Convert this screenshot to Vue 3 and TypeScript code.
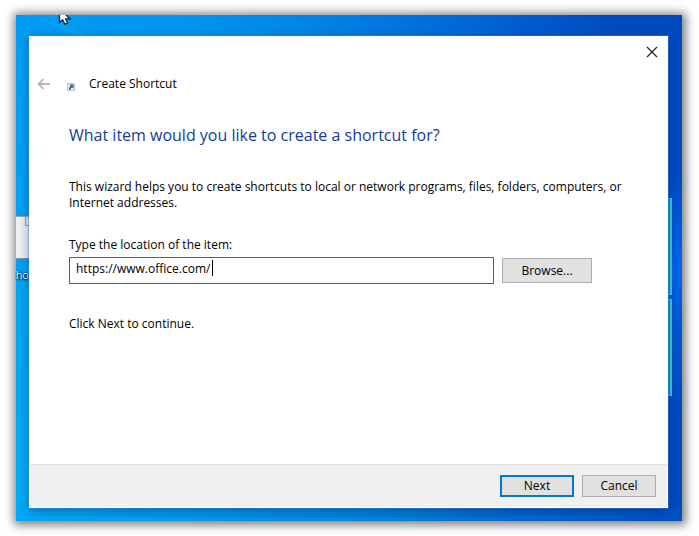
<script setup lang="ts">
import { ref } from 'vue'

const location = ref<string>('https://www.office.com/')
</script>

<template>
  <div class="page">
    <div class="desktop">
      <svg class="rays" viewBox="0 0 120 24" aria-hidden="true">
        <path d="M8 0Q45 6 78 24L58 20Q30 6 8 0Z" fill="#39b2ff" opacity="0.22" />
      </svg>
      <div class="shortcut">
        <div class="thumb"><i></i></div>
        <span class="caption">ho</span>
      </div>
      <div class="tiles"><i></i><i></i></div>
      <svg class="pointer" viewBox="0 0 14 10" aria-hidden="true">
        <path d="M1.5 -6V7.5L4.6 4.8L7 9.2L9.6 8L7.6 3.8H12L2 -6Z" fill="#fff" stroke="#10243c" stroke-width="1.3" />
      </svg>

      <main class="dialog">
        <header class="titlebar">
          <button class="plain back" type="button" aria-label="Back" disabled>
            <svg width="14" height="12" viewBox="0 0 14 12">
              <path d="M13 6H1.5M6.5 1L1.5 6L6.5 11" fill="none" stroke="#b9b9b9" stroke-width="1.8" />
            </svg>
          </button>
          <svg class="badge" width="8" height="8" viewBox="0 0 8 8" aria-hidden="true">
            <rect x="0.5" y="0.5" width="7" height="7" fill="#f1f1f1" stroke="#c4c4c4" />
            <path d="M2.3 1.5H6.5V5.5L5.2 4.4C4 4.9 3.7 5.6 3.7 6.8H1.9C1.7 5 2.3 3.8 3.6 2.9Z" fill="#2f64b0" />
          </svg>
          <span class="title">Create Shortcut</span>
          <button class="plain close" type="button" aria-label="Close">
            <svg width="12" height="12" viewBox="0 0 12 12">
              <path d="M1 1L11 11M11 1L1 11" fill="none" stroke="#222" stroke-width="1.2" />
            </svg>
          </button>
        </header>

        <section class="content">
          <h1>What item would you like to create a shortcut for?</h1>
          <p class="intro">This wizard helps you to create shortcuts to local or network programs, files, folders, computers, or Internet addresses.</p>
          <label for="location">Type the location of the item:</label>
          <div class="row">
            <div class="field">
              <input id="location" v-model="location" type="text" spellcheck="false" />
              <i class="caret"></i>
            </div>
            <button class="btn browse" type="button">Browse...</button>
          </div>
          <p class="hint">Click Next to continue.</p>
        </section>

        <footer class="actions">
          <button class="btn primary" type="button">Next</button>
          <button class="btn" type="button">Cancel</button>
        </footer>
      </main>
    </div>
  </div>
</template>

<style>
body {
  background: #fff;
}
</style>

<style scoped>
.page {
  box-sizing: border-box;
  min-height: 100vh;
  padding: 15px 17px 15px 16px;
  display: flex;
  overflow: hidden;
  font: 12px/16px "Open Sans", "Noto Sans", sans-serif;
  color: #000;
}
.desktop {
  position: relative;
  flex: 1;
  display: flex;
  padding: 21px 14px 13px 13px;
  background:
    linear-gradient(to bottom, transparent 30%, rgba(0, 112, 255, 0.7) 50%, rgba(0, 100, 225, 0.5) 62%, transparent 80%) right / 14px 100% no-repeat,
    linear-gradient(to right, #00aaf6 0%, #009bea 25%, #0083dc 55%, #0062cc 80%, #0050c0 100%) bottom / 100% 13px no-repeat,
    linear-gradient(to bottom, #009cf2, #00adf2) left / 13px 100% no-repeat,
    linear-gradient(to right, #009cf2 0%, #0096ee 25%, #0084e6 45%, #0065d4 70%, #004bc0 90%, #004abf 100%);
  box-shadow: 1px 1px 9px 3px rgba(0, 0, 0, 0.5);
}
.dialog {
  position: relative;
  flex: 1;
  display: flex;
  flex-direction: column;
  background: #fff;
  box-shadow: 0 0 0 1px rgba(50, 130, 210, 0.45), 0 3px 10px rgba(0, 20, 80, 0.4);
}
.titlebar {
  display: flex;
  align-items: center;
  height: 64px;
  padding: 0 10px 0 8px;
}
.plain {
  display: flex;
  padding: 0;
  border: 0;
  background: none;
}
.back,
.title {
  margin-top: 31px;
}
.badge {
  margin-top: 38px;
  margin-left: 16px;
}
.title {
  margin-left: 14px;
}
.close {
  margin: 0 0 32px auto;
}
.content {
  flex: 1;
  padding: 23px 40px 0 40px;
}
h1 {
  margin: 0;
  font-size: 16px;
  line-height: 24px;
  font-weight: 400;
  color: #123c9c;
}
p {
  margin: 0;
}
.intro {
  margin-top: 32px;
}
label {
  display: block;
  margin-top: 26px;
}
.row {
  display: flex;
  align-items: center;
  gap: 8px;
  margin-top: 4px;
  padding-right: 36px;
}
.field {
  position: relative;
  flex: 1;
  display: flex;
}
input {
  box-sizing: border-box;
  width: 100%;
  height: 27px;
  padding: 0 6px 4px;
  border: 1px solid #0078d7;
  border-radius: 0;
  outline: 0;
  background: #fff;
  color: #000;
  font: inherit;
}
.caret {
  position: absolute;
  left: 143px;
  top: 3px;
  width: 1px;
  height: 16px;
  background: #000;
}
.btn {
  box-sizing: border-box;
  width: 74px;
  height: 22px;
  padding: 0;
  border: 1px solid #adadad;
  border-radius: 0;
  background: #e1e1e1;
  color: #000;
  font: inherit;
}
.browse {
  width: 90px;
  height: 25px;
}
.primary {
  border: 2px solid #0078d7;
}
.hint {
  margin-top: 32px;
}
.actions {
  display: flex;
  justify-content: flex-end;
  gap: 8px;
  margin: 0 1px 1px;
  padding: 10px 11px;
  border-top: 1px solid #dfdfdf;
  background: #f0f0f0;
}
.pointer {
  position: absolute;
  left: 42px;
  top: 0;
  width: 14px;
  height: 10px;
}
.rays {
  position: absolute;
  left: 0;
  top: 0;
  width: 120px;
  height: 24px;
}
.shortcut {
  position: absolute;
  left: 0;
  top: 201px;
  width: 13px;
}
.thumb {
  display: flex;
  justify-content: flex-end;
  height: 41px;
  border-top: 1px solid #9aa7b0;
  border-bottom: 1px solid #84939c;
  background: #eef0f4;
}
.thumb i {
  width: 3px;
  height: 8px;
  border-left: 1px solid #999;
  border-bottom: 1px solid #999;
}
.caption {
  display: flex;
  justify-content: flex-end;
  margin-top: 8px;
  font-size: 11px;
  color: #fff;
  text-shadow: 1px 1px 2px #000, 0 0 2px #000;
}
.tiles {
  position: absolute;
  right: 10px;
  top: 183px;
  width: 4px;
  display: grid;
  gap: 4px;
}
.tiles i {
  box-sizing: border-box;
  height: 97px;
  border: 1px solid #35d4e0;
  border-width: 1px 2px 1px 0;
  background: #168dcb;
}
</style>
